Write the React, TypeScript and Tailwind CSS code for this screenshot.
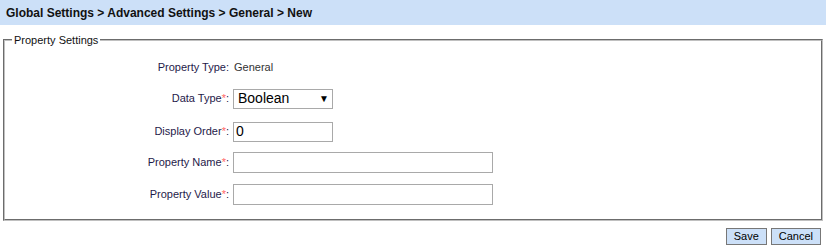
import React from 'react';

const Row = ({
  label,
  required,
  className,
  children,
}: {
  label: string;
  required?: boolean;
  className: string;
  children: React.ReactNode;
}) => (
  <div className={`flex items-center ${className}`}>
    <div className="w-[228px] text-right text-[#1f1a4a] pr-[4px]">
      {label}
      {required && <span className="text-[#ff6666]">*</span>}:
    </div>
    {children}
  </div>
);

const App = () => {
  return (
    <div className="w-[826px] h-[248px] bg-white font-['Liberation_Sans',Arial,sans-serif] text-[11px]">
      <div className="h-[25px] bg-[#cce0f8] px-[6px] flex items-center">
        <span className="font-bold text-[12px] text-[#111]">Global Settings &gt; Advanced Settings &gt; General &gt; New</span>
      </div>

      <fieldset className="mx-[3px] mt-[7px] border-2 [border-style:groove] border-[#c0c0c0] pb-[14px]">
        <legend className="ml-[7px] px-[2px] text-[11px] text-[#111]">Property Settings</legend>

        <div className="flex flex-col mt-[9px]">
          <Row label="Property Type" className="h-[20px]">
            <span className="text-[#333] pl-[1px]">General</span>
          </Row>

          <Row label="Data Type" required className="h-[20px] mt-[11px]">
            <div className="h-[20px] w-[100px] border border-[#a9a9a9] flex items-center justify-between pl-[4px] pr-[3px] text-[14px] text-black">
              <span>Boolean</span>
              <span className="text-[10px]">▼</span>
            </div>
          </Row>

          <Row label="Display Order" required className="h-[20px] mt-[13px]">
            <input
              className="h-[20px] w-[100px] border border-[#a9a9a9] px-[2px] text-[14px] text-black outline-none"
              defaultValue="0"
            />
          </Row>

          <Row label="Property Name" required className="h-[21px] mt-[10px]">
            <input className="h-[21px] w-[260px] border border-[#a9a9a9] outline-none" />
          </Row>

          <Row label="Property Value" required className="h-[21px] mt-[11px]">
            <input className="h-[21px] w-[260px] border border-[#a9a9a9] outline-none" />
          </Row>
        </div>
      </fieldset>

      <div className="flex justify-end gap-[4px] mr-[5px] mt-[7px]">
        <button className="h-[17px] px-[7px] bg-[#cce0f8] border border-[#777] text-[11px] text-black leading-none">Save</button>
        <button className="h-[17px] px-[7px] bg-[#cce0f8] border border-[#777] text-[11px] text-black leading-none">Cancel</button>
      </div>
    </div>
  );
};

export default App;
